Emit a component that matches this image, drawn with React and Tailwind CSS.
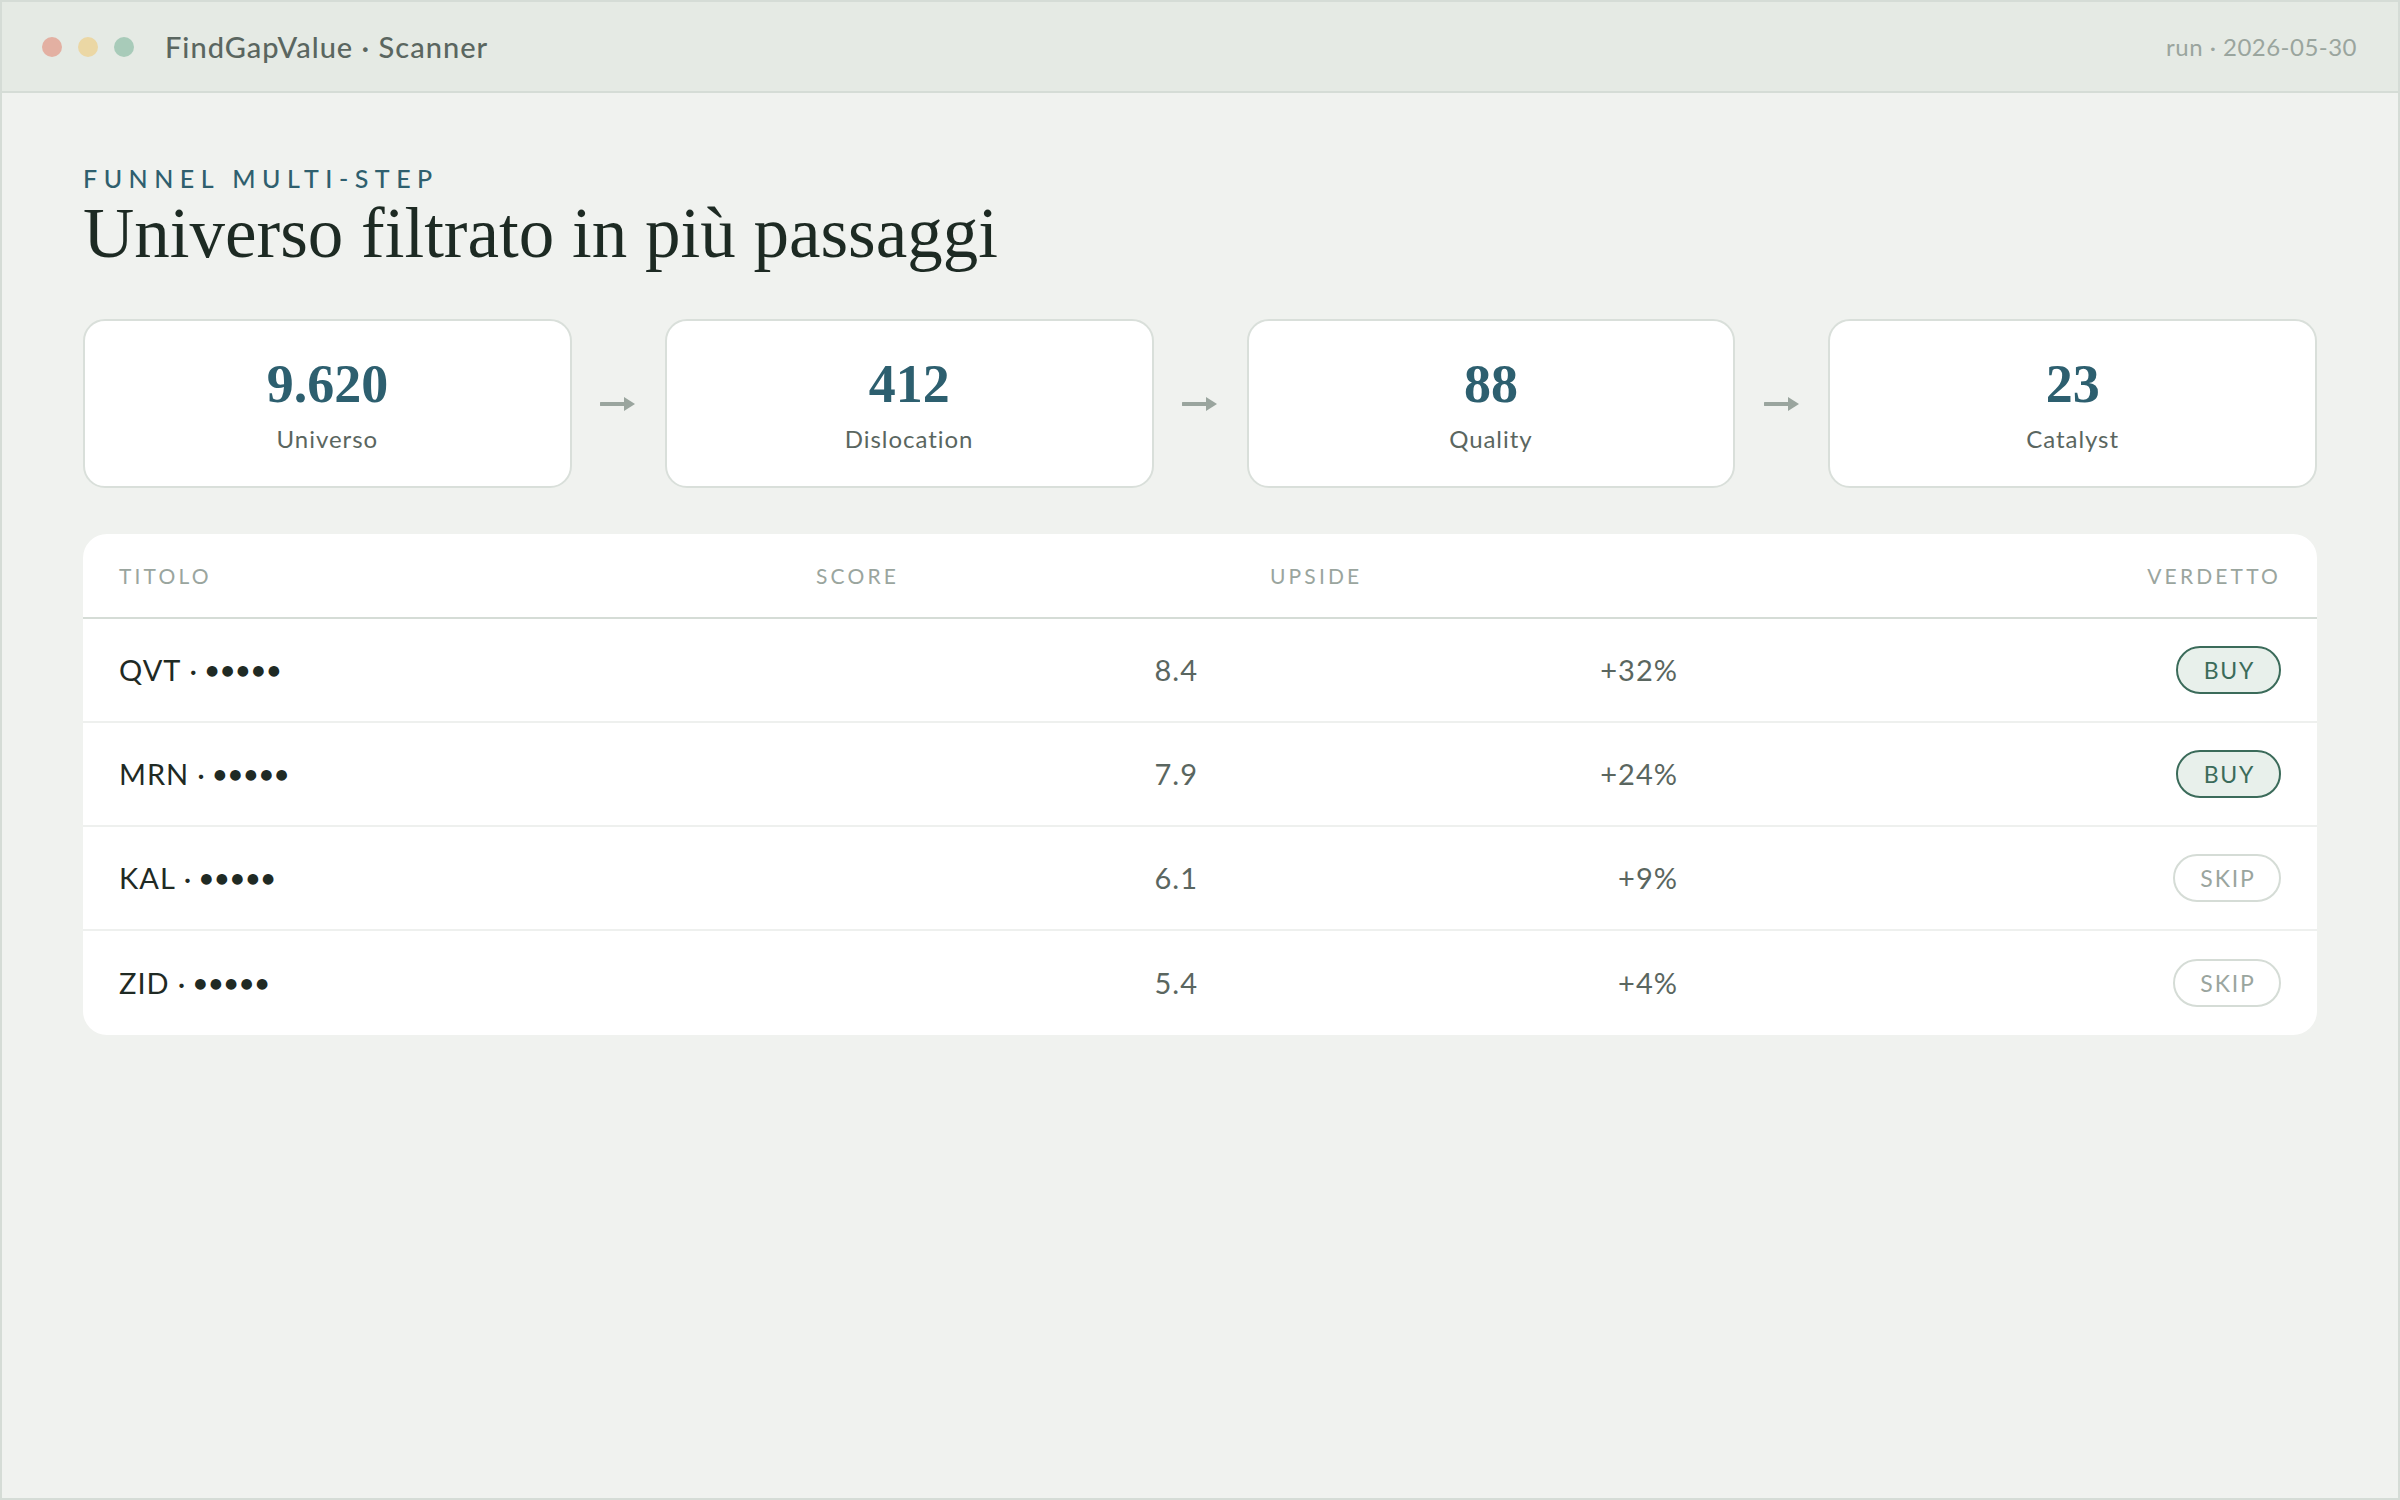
const sans = "font-['Lato','Noto_Sans',sans-serif]";
const serif = "font-['Liberation_Serif','DejaVu_Serif',serif]";

const steps = [
  { value: "9.620", label: "Universo" },
  { value: "412", label: "Dislocation" },
  { value: "88", label: "Quality" },
  { value: "23", label: "Catalyst" },
];

const rows = [
  { ticker: "QVT", score: "8.4", upside: "+32%", verdict: "BUY" },
  { ticker: "MRN", score: "7.9", upside: "+24%", verdict: "BUY" },
  { ticker: "KAL", score: "6.1", upside: "+9%", verdict: "SKIP" },
  { ticker: "ZID", score: "5.4", upside: "+4%", verdict: "SKIP" },
];

const cols = "grid grid-cols-[697px_454px_480px_1fr]";

const Arrow = () => (
  <svg width="36" height="20" viewBox="0 0 36 20" fill="none">
    <path d="M1 10 H27" stroke="#9aa59e" strokeWidth="4" strokeLinecap="round" />
    <path d="M24 3 L35 10 L24 17 Z" fill="#9aa59e" />
  </svg>
);

const Verdict = ({ value }) =>
  value === "BUY" ? (
    <span className="flex h-[48px] w-[105px] items-center justify-center rounded-full border-2 border-[#3b6b5a] bg-[#e8f0eb] pl-[2px] text-[23px] leading-none tracking-[0.08em] text-[#3b6b5a]">
      BUY
    </span>
  ) : (
    <span className="flex h-[48px] w-[108px] items-center justify-center rounded-full border-2 border-[#d5dcd6] bg-white pl-[2px] text-[23px] leading-none tracking-[0.08em] text-[#9aa59e]">
      SKIP
    </span>
  );

export default function App() {
  return (
    <div
      className={`flex h-[1500px] w-[2400px] flex-col border-2 border-[#d5dcd6] bg-[#f0f2ef] ${sans}`}
    >
      <div className="flex h-[91px] shrink-0 items-center justify-between border-b-2 border-[#d5dcd6] bg-[#e5eae4] pl-[40px] pr-[41px]">
        <div className="flex items-center">
          <div className="flex items-center gap-[16px]">
            <span className="h-[20px] w-[20px] rounded-full bg-[#e3b0a2]" />
            <span className="h-[20px] w-[20px] rounded-full bg-[#ebd7a4]" />
            <span className="h-[20px] w-[20px] rounded-full bg-[#a8cbb9]" />
          </div>
          <span className="ml-[31px] text-[29px] font-medium tracking-[0.035em] text-[#5a6660]">
            FindGapValue · Scanner
          </span>
        </div>
        <span className="text-[24px] tracking-[0.02em] text-[#9aa59e]">
          run · 2026-05-30
        </span>
      </div>

      <main className="px-[81px] pt-[73px]">
        <p className="text-[25px] font-medium uppercase leading-none tracking-[0.26em] text-[#2f5f6e]">
          Funnel multi-step
        </p>
        <h1
          className={`mt-[7px] text-[71px] leading-none text-[#1d2a23] ${serif}`}
        >
          Universo filtrato in più passaggi
        </h1>

        <div className="mt-[50px] grid grid-cols-[1fr_93px_1fr_93px_1fr_93px_1fr]">
          {steps.map((step, i) => (
            <div key={step.label} className="contents">
              {i > 0 && (
                <div className="flex items-center justify-center">
                  <Arrow />
                </div>
              )}
              <div className="flex h-[169px] flex-col items-center justify-center gap-[16px] rounded-[22px] border-2 border-[#d9dfda] bg-white">
                <span
                  className={`text-[54px] font-semibold leading-none text-[#2d5f6f] ${serif}`}
                >
                  {step.value}
                </span>
                <span className="text-[24px] leading-none tracking-[0.04em] text-[#5a6660]">
                  {step.label}
                </span>
              </div>
            </div>
          ))}
        </div>

        <div className="mt-[46px] overflow-hidden rounded-[24px] bg-white">
          <div
            className={`${cols} h-[85px] items-center border-b-2 border-[#d5dcd6] text-[21px] uppercase tracking-[0.15em] text-[#9aa59e]`}
          >
            <span className="px-[36px]">Titolo</span>
            <span className="px-[36px]">Score</span>
            <span className="px-[36px]">Upside</span>
            <span className="px-[36px] text-right">Verdetto</span>
          </div>
          {rows.map((row, i) => (
            <div
              key={row.ticker}
              className={`${cols} h-[104px] items-center text-[29px] tracking-[0.035em] ${i < rows.length - 1 ? "border-b-2 border-[#eef0ee]" : ""}`}
            >
              <span className="flex items-center px-[36px] text-[#1f2a24]">
                {row.ticker}
                <span className="mx-[8px]">·</span>
                <span className="font-['DejaVu_Sans',sans-serif] text-[14px] tracking-[0.23em]">
                  ●●●●●
                </span>
              </span>
              <span className="px-[36px] text-right text-[#5a6660]">
                {row.score}
              </span>
              <span className="px-[36px] text-right text-[#5a6660]">
                {row.upside}
              </span>
              <span className="flex justify-end px-[36px]">
                <Verdict value={row.verdict} />
              </span>
            </div>
          ))}
        </div>
      </main>
    </div>
  );
}
